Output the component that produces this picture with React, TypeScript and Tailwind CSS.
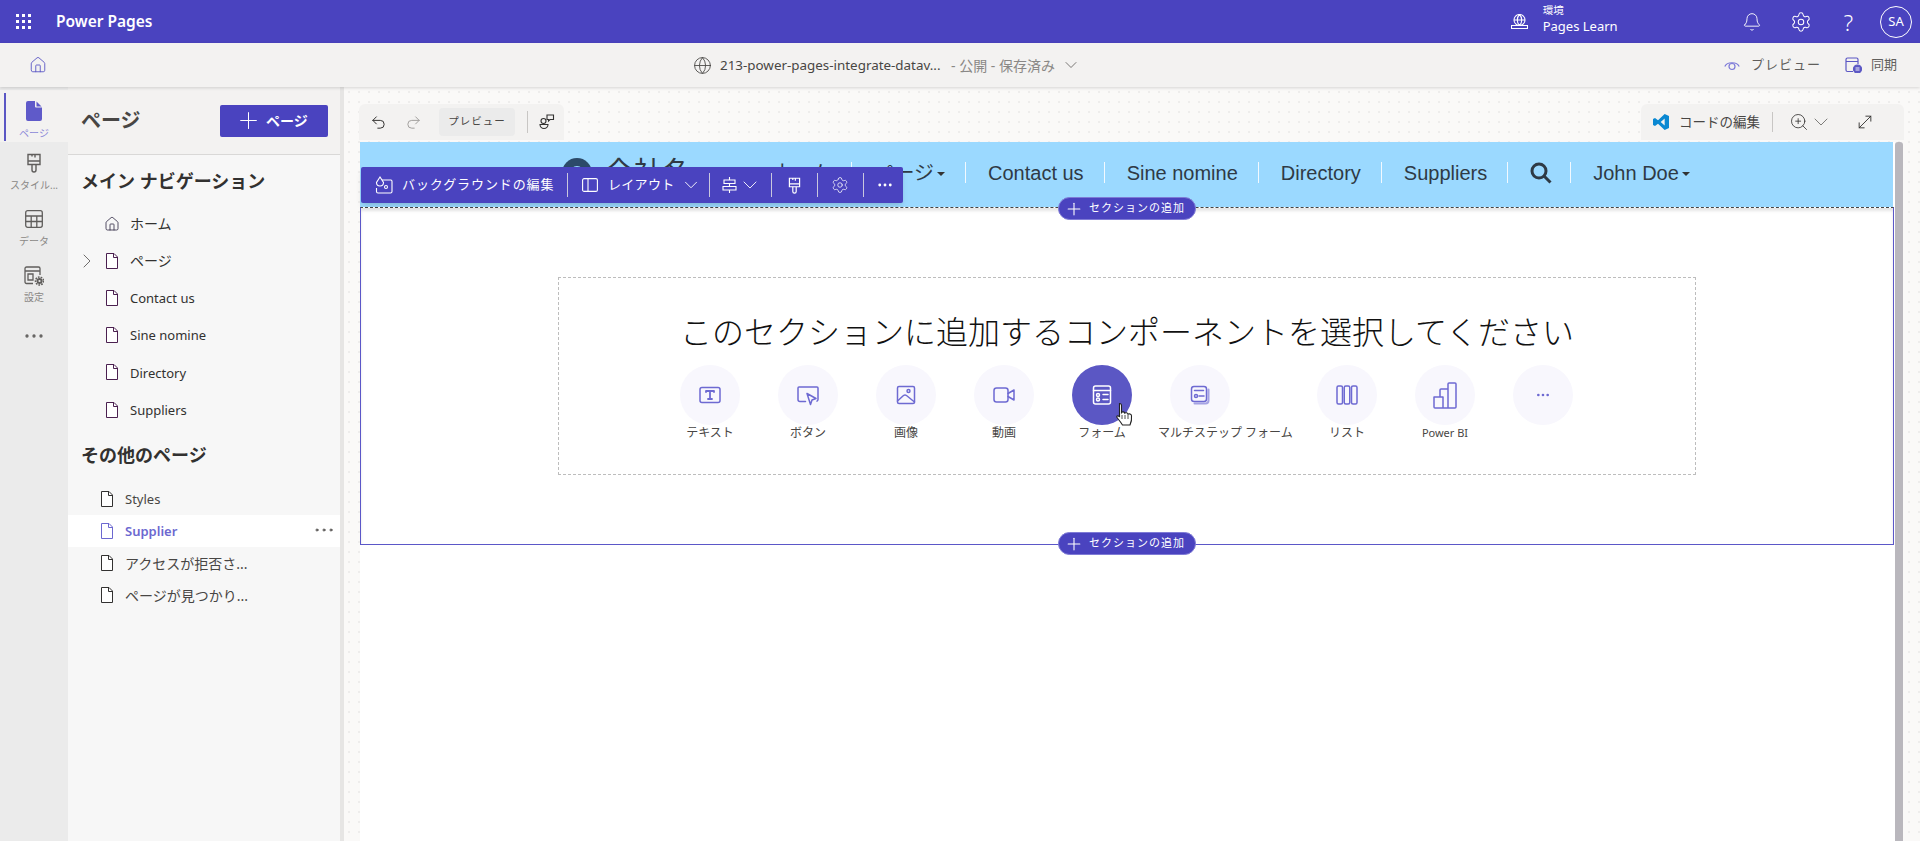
import React from "react";
import { ChevronDown, ChevronRight, Plus, Bell, Settings, Undo2, Redo2, Globe, ZoomIn, MoveDiagonal, Home, Ellipsis } from "lucide-react";

const Doc = ({ c = "#4b2050" }: { c?: string }) => (
  <svg width="14" height="16" viewBox="0 0 14 16" fill="none" stroke={c} strokeWidth="1" className="shrink-0">
    <path d="M1.500.5h7.500l3.500 3.500v11.500h-11z" fill="#fff" />
    <path d="M8.500.5v4h4" />
  </svg>
);

const Brush = ({ c = "#605e5c", s = 20 }: { c?: string; s?: number }) => (
  <svg width={s} height={s} viewBox="0 0 20 20" fill="none" stroke={c} strokeWidth="1.400">
    <path d="M4 1.500h12v10H4zM4 8h12M11 1.500v3M8 1.500v2" />
    <path d="M8 11.500v5.500a2 2 0 0 0 4 0v-5.500" />
  </svg>
);

const I = "#6e6ad2";

const Row = ({ label, chev, home, latin }: { label: string; chev?: boolean; home?: boolean; latin?: boolean }) => (
  <div className={`relative flex h-[37.2px] items-center gap-[11px] pl-[37px] text-[#323130] ${latin ? "text-[13px]" : "text-[14px]"}`}>
    {chev && <ChevronRight size={24} strokeWidth={0.9} className="absolute left-[7px] text-[#605e5c]" />}
    {home ? <Home size={16} strokeWidth={1.200} className="-mx-px text-[#2b2440]" /> : <Doc />}
    <span className={latin ? "pt-[2px]" : ""}>{label}</span>
  </div>
);

const Row2 = ({ label, active, latin }: { label: string; active?: boolean; latin?: boolean }) => (
  <div className={`relative flex h-[32px] items-center gap-[11px] pl-[32px] ${latin ? "text-[13px]" : "text-[14px]"} ${active ? "bg-white font-semibold text-[#6c68d0]" : "text-[#484644]"}`}>
    <Doc c={active ? "#6c68d0" : "#323130"} />
    <span className={latin ? "pt-[2px]" : ""}>{label}</span>
    {active && <Ellipsis size={24} strokeWidth={1} className="absolute right-[4px] top-[3px] text-[#484644]" />}
  </div>
);

const RailItem = ({ icon, label, active, h }: { icon: React.ReactNode; label: string; active?: boolean; h: number }) => (
  <div style={{ height: h }} className={`relative flex flex-col items-center pt-[10px] ${active ? "bg-[#f3f2f1]" : ""}`}>
    {active && <div className="absolute left-[4px] top-[3px] h-[48px] w-[2px] bg-[#5b57c4]" />}
    <div className="flex h-[22px] items-center">{icon}</div>
    <span className={`mt-[4px] whitespace-nowrap text-[10px] leading-[14px] ${active ? "text-[#8b88d8]" : "text-[#8a8886]"}`}>{label}</span>
  </div>
);

const Sep = () => <div className="h-[24px] w-px bg-[#c9c7de]" />;

const Comp = ({ icon, label, active, wide }: { icon: React.ReactNode; label: string; active?: boolean; wide?: boolean }) => (
  <div className={`mr-[38px] flex shrink-0 flex-col ${wide ? "w-[109px] items-start" : "w-[60px] items-center"}`}>
    <div className={`relative flex h-[60px] w-[60px] items-center justify-center rounded-full ${active ? "bg-[#5b57c4]" : "bg-[#f8f7fd]"}`}>
      {icon}
      {active && (
        <svg width="20" height="25" viewBox="0 0 20 25" className="absolute left-[43px] top-[37px]">
          <path d="M4.500 1.500c1.300 0 2 .8 2 2v7c.6-1 3-.8 3.300.7.800-.8 3-.5 3.200 1 1-.6 3.300-.2 3.500 1.500.4 3.500 0 6-1.500 9.300H7.500c-1.500-2.500-3.500-5-5.500-7.500-.8-1 .3-2.500 2.500-1z" fill="#fff" stroke="#222" strokeWidth="1.100" />
          <path d="M7 13v4M10 13v4M13 13v4" stroke="#222" strokeWidth=".8" />
        </svg>
      )}
    </div>
    <span className={`h-[16px] whitespace-nowrap leading-[16px] text-[#484644] ${label === "Power BI" ? "text-[11px]" : "text-[12px]"} ${wide ? "-ml-[12px]" : ""}`}>{label}</span>
  </div>
);

const ico = (children: React.ReactNode, c = I, w = 24) => (
  <svg width={w} height={w} viewBox="0 0 24 24" fill="none" stroke={c} strokeWidth="1.500" strokeLinejoin="round" strokeLinecap="round">
    {children}
  </svg>
);

const AddPill = ({ top }: { top: number }) => (
  <div style={{ top }} className="absolute left-[698px] flex h-[23px] w-[138px] items-center gap-[5px] rounded-full border border-[#7f7bd6] bg-[#4a43bf] pl-[5px] text-[11px] tracking-[1px] text-white">
    <Plus size={20} strokeWidth={1.300} className="shrink-0" />
    <span className="whitespace-nowrap">セクションの追加</span>
  </div>
);

const NavLink = ({ children, sep = true, caret, tight }: { children: React.ReactNode; sep?: boolean; caret?: boolean; tight?: boolean }) => (
  <div className="flex items-center">
    <span className={`flex items-center pl-[22px] ${tight ? "pr-[18px]" : "pr-[20px]"}`}>
      {children}
      {caret && <span className="ml-[3px] mt-[2px] h-0 w-0 border-x-[4px] border-t-[4px] border-x-transparent border-t-[#333]" />}
    </span>
    {sep && <span className="h-[21px] w-px bg-[#f2f9ff]" />}
  </div>
);

export default function App() {
  return (
    <div className="flex h-[841px] w-[1920px] flex-col overflow-hidden bg-white font-['Noto_Sans','Noto_Sans_CJK_JP',sans-serif]">
      {/* top bar */}
      <header className="flex h-[43px] shrink-0 items-center bg-[#4a43bf] text-white">
        <svg width="16" height="16" viewBox="0 0 16 16" fill="#fff" className="ml-[16px]">
          {[0, 6, 12].flatMap((y) => [0, 6, 12].map((x) => <rect key={`${x}-${y}`} x={x} y={y} width="3" height="3" />))}
        </svg>
        <span className="ml-[24px] text-[15.500px] font-semibold">Power Pages</span>
        <div className="ml-auto flex items-center">
          <svg width="17" height="15" viewBox="0 0 17 15" fill="none" stroke="#fff" strokeWidth="1.100">
            <circle cx="8.500" cy="6" r="5.500" />
            <path d="M3 6h11M8.500.5c-3 3-3 8 0 11M8.500.5c3 3 3 8 0 11M.5 11.500h16v3H.5z" />
          </svg>
          <div className="-mt-[5px] ml-[15px] flex w-[74px] flex-col">
            <span className="text-[10.500px] leading-[14px]">環境</span>
            <span className="whitespace-nowrap text-[13px] leading-[18px]">Pages Learn</span>
          </div>
          <Bell size={20} strokeWidth={1.100} className="ml-[125px]" />
          <Settings size={22} strokeWidth={1.100} className="ml-[28px]" />
          <span className="ml-[32px] text-[22px] font-light leading-none">?</span>
          <div className="ml-[27px] mr-[8px] flex h-[32px] w-[32px] items-center justify-center rounded-full border border-white text-[13px]">SA</div>
        </div>
      </header>

      {/* sub bar */}
      <div className="relative z-10 flex h-[44px] shrink-0 items-center bg-[#f3f2f1] shadow-[0_1px_3px_rgba(0,0,0,0.15)]">
        <Home size={18} strokeWidth={1.200} className="ml-[29px] text-[#5b57c4]" />
        <div className="ml-[646px] flex items-center text-[14px] text-[#484644]">
          <Globe size={19} strokeWidth={1.100} className="text-[#484644]" />
          <span className="ml-[8px] w-[221px] whitespace-nowrap text-[13.400px]">213-power-pages-integrate-datav...</span>
          <span className="ml-[10px] whitespace-nowrap text-[#8a8886]">- 公開 - 保存済み</span>
          <ChevronDown size={20} strokeWidth={1} className="ml-[6px] text-[#605e5c]" />
        </div>
        <div className="ml-auto mr-[23px] flex items-center text-[13px] text-[#605e5c]">
          <svg width="16" height="12" viewBox="0 0 16 12" fill="none" stroke="#7d7ad8" strokeWidth="1.200">
            <path d="M.8 7.500C3 2.500 13 2.500 15.200 7.500" />
            <circle cx="8" cy="7.500" r="3" />
          </svg>
          <span className="ml-[11px] whitespace-nowrap tracking-[1px]">プレビュー</span>
          <svg width="17" height="16" viewBox="0 0 17 16" fill="none" stroke="#5b57c4" strokeWidth="1.200" className="ml-[24px]">
            <path d="M8 14.500H2.500a1.500 1.500 0 0 1-1.500-1.500V2.500A1.500 1.500 0 0 1 2.500 1h9A1.500 1.500 0 0 1 13 2.500V7M1 4.500h12" />
            <circle cx="12.500" cy="12" r="4" fill="#5b57c4" />
            <path d="M10.500 11h4M10.500 13h4" stroke="#fff" strokeWidth=".9" />
          </svg>
          <span className="ml-[9px] whitespace-nowrap">同期</span>
        </div>
      </div>

      {/* body */}
      <div className="flex min-h-0 flex-1">
        {/* rail */}
        <aside className="w-[68px] shrink-0 bg-[#ebebeb] pt-[3px]">
          <RailItem
            active
            h={52}
            label="ページ"
            icon={
              <svg width="16" height="20" viewBox="0 0 16 20">
                <path d="M2 0h7v5.500a1 1 0 0 0 1 1h6V18a2 2 0 0 1-2 2H2a2 2 0 0 1-2-2V2a2 2 0 0 1 2-2z" fill="#5f5ac9" />
                <path d="M10.500 .5l5 5h-5z" fill="#5f5ac9" />
              </svg>
            }
          />
          <RailItem h={56} label="スタイル..." icon={<Brush s={20} />} />
          <RailItem
            h={58}
            label="データ"
            icon={
              <svg width="18" height="18" viewBox="0 0 18 18" fill="none" stroke="#605e5c" strokeWidth="1.300">
                <rect x=".7" y=".7" width="16.600" height="16.600" rx="2" />
                <path d="M.7 6h16.600M.7 11.500h16.600M6.200 6v11.300M11.800 6v11.300" />
              </svg>
            }
          />
          <RailItem
            h={41}
            label="設定"
            icon={
              <svg width="20" height="20" viewBox="0 0 20 20" fill="none" stroke="#605e5c" strokeWidth="1.300">
                <path d="M9 17.500H2.500a1.500 1.500 0 0 1-1.500-1.500V2.500A1.500 1.500 0 0 1 2.500 1h12A1.500 1.500 0 0 1 16 2.500V9M1 5h15M4 8h5v6H4z" />
                <circle cx="15.500" cy="15" r="3.600" fill="#605e5c" stroke="#ebebeb" strokeWidth="1" />
                <circle cx="15.500" cy="15" r="4" stroke="#605e5c" strokeWidth="1.600" strokeDasharray="1.600 1.200" />
                <circle cx="15.500" cy="15" r="1.100" fill="#ebebeb" stroke="none" />
              </svg>
            }
          />
          <div className="mt-[27px] flex justify-center">
            <Ellipsis size={24} strokeWidth={1.300} className="text-[#605e5c]" />
          </div>
        </aside>

        {/* pages panel */}
        <aside className="flex w-[276px] shrink-0 flex-col border-r-[4px] border-[#e6e5e4] bg-[#f7f7f7]">
          <div className="flex h-[68px] shrink-0 items-center justify-between border-b border-[#d9d8d7] bg-[#f3f2f1] pl-[13px] pr-[12px]">
            <span className="text-[20px] font-semibold text-[#484644]">ページ</span>
            <button className="flex h-[32px] w-[108px] items-center gap-[4px] rounded-[2px] bg-[#4a43bf] pl-[15px] text-[14px] font-semibold text-white">
              <Plus size={27} strokeWidth={0.9} />
              ページ
            </button>
          </div>
          <div className="mb-[12px] ml-[13px] mt-[14px] flex h-[24px] items-center whitespace-nowrap text-[18px] font-semibold text-[#323130]">メイン ナビゲーション</div>
          <Row label="ホーム" home />
          <Row label="ページ" chev />
          <Row label="Contact us" latin />
          <Row label="Sine nomine" latin />
          <Row label="Directory" latin />
          <Row label="Suppliers" latin />
          <div className="mb-[16px] ml-[13px] mt-[15px] flex h-[24px] items-center text-[18px] font-semibold text-[#323130]">その他のページ</div>
          <Row2 label="Styles" latin />
          <Row2 label="Supplier" active latin />
          <Row2 label="アクセスが拒否さ..." />
          <Row2 label="ページが見つかり..." />
        </aside>

        {/* canvas */}
        <main className="flex min-w-0 flex-1 flex-col bg-[#faf9f8] bg-[radial-gradient(#eeedec_1px,transparent_1.2px)] bg-[size:10px_10px] pl-[16px] pr-[17px] pt-[17px]">
          <div className="mb-[2px] flex h-[36px] shrink-0 justify-between">
            <div className="-ml-px flex h-[36px] w-[205px] items-center rounded-t-[6px] bg-[#f3f2f1] text-[#323130]">
              <Undo2 size={17} strokeWidth={1.400} className="ml-[11px]" />
              <Redo2 size={17} strokeWidth={1.400} className="ml-[18px] text-[#a19f9d]" />
              <span className="ml-[17px] flex h-[28px] w-[76px] items-center justify-center rounded-[4px] bg-[#ebebeb] text-[10.500px] tracking-[1px] text-[#484644]">プレビュー</span>
              <span className="ml-[12px] h-[22px] w-px bg-[#c8c6c4]" />
              <svg width="16" height="16" viewBox="0 0 16 16" fill="none" stroke="#323130" strokeWidth="1.100" className="ml-[11px]">
                <path d="M1 10.500h8a4 4 0 0 1-8 0z" />
                <circle cx="4.500" cy="7" r="2.500" />
                <path d="M8 1h6.500v4.500H11l-1.500 1.500V5.500H8z" />
              </svg>
            </div>
            <div className="-mr-px flex h-[36px] w-[263px] items-center rounded-t-[6px] bg-[#f3f2f1] text-[#323130]">
              <svg width="16" height="16" viewBox="0 0 24 24" className="ml-[12px]">
                <path d="M17.500 0L24 3v18l-6.500 3-10-9.500-4.500 3.500-3-1.500V7.500L3 6l4.500 3.500zM17.500 6.800L11.500 12l6 5.200z" fill="#0a88d2" />
              </svg>
              <span className="ml-[10px] whitespace-nowrap text-[13.500px] text-[#484644]">コードの編集</span>
              <span className="ml-[12px] h-[20px] w-px bg-[#c8c6c4]" />
              <ZoomIn size={20} strokeWidth={1} className="ml-[16px]" />
              <ChevronDown size={24} strokeWidth={0.8} className="text-[#605e5c]" />
              <MoveDiagonal size={20} strokeWidth={1.100} className="ml-[22px]" />
            </div>
          </div>

          <div className="relative flex min-h-0 flex-1">
            <div className="flex w-[1535px] flex-col bg-white">
              {/* site nav */}
              <div className="flex h-[65px] w-[1533px] shrink-0 items-center bg-[#9bd9ff] pb-[4px] pl-[202px] font-['Liberation_Sans','Noto_Sans_CJK_JP',sans-serif] text-[20px] text-[#2f3a45]">
                <div className="flex h-[30px] w-[30px] items-center justify-center rounded-full bg-[#2c4a69]">
                  <div className="h-[14px] w-[14px] rounded-full border-[2px] border-[#9bd9ff]" />
                </div>
                <span className="ml-[13px] w-[83px] whitespace-nowrap text-[28px] tracking-[1px]">会社名</span>
                <div className="ml-[62px] flex items-center">
                  <NavLink>ホーム</NavLink>
                  <NavLink caret>ページ</NavLink>
                  <NavLink>Contact us</NavLink>
                  <NavLink>Sine nomine</NavLink>
                  <NavLink>Directory</NavLink>
                  <NavLink>Suppliers</NavLink>
                  <NavLink tight>
                    <svg width="22" height="22" viewBox="0 0 22 22" fill="none" stroke="#2f3a45" strokeWidth="3">
                      <circle cx="9" cy="9" r="7" />
                      <path d="M14 14l6.500 6.500" />
                    </svg>
                  </NavLink>
                  <NavLink sep={false} caret>
                    John Doe
                  </NavLink>
                </div>
              </div>

              {/* section */}
              <div className="h-[338px] w-[1534px] shrink-0 border border-x-[#5b57c8] border-b-[#5b57c8] border-t-[#444] pt-[69px] shadow-[inset_0_3px_3px_rgba(0,0,0,0.10)] [border-top-style:dashed]">
                <div className="ml-[197px] flex h-[198px] w-[1138px] flex-col items-center border border-dashed border-[#bdbdbd]">
                  <h2 className="mt-[32px] h-[44px] whitespace-nowrap text-[32px] font-light leading-[44px] text-[#111]">このセクションに追加するコンポーネントを選択してください</h2>
                  <div className="mt-[11px] flex w-full pl-[121px]">
                    <Comp label="テキスト" icon={ico(<><rect x="2" y="4.500" width="20" height="15" rx="2" /><path d="M8 9V8h8v1M12 8v8M10 16h4" strokeWidth="1.800" /></>)} />
                    <Comp label="ボタン" icon={ico(<><path d="M9.500 18.500H4a2 2 0 0 1-2-2V5a1 1 0 0 1 1-1h18a1 1 0 0 1 1 1v11.500a2 2 0 0 1-1 1.700" /><path d="M11 10.500l9 5-4 1.500-1.500 4.500z" /></>)} />
                    <Comp label="画像" icon={ico(<><rect x="3.500" y="3.500" width="17" height="17" rx="1.500" /><circle cx="14.500" cy="8" r="1.500" /><path d="M3.500 18l6-5.500c1-.8 2-.8 3 0l8 6.500" /></>)} />
                    <Comp label="動画" icon={ico(<><rect x="2" y="5" width="14" height="14" rx="2.500" /><path d="M16 10.500l6-3.500v10l-6-3.500" /></>)} />
                    <Comp active label="フォーム" icon={ico(<><rect x="3.500" y="3" width="17" height="18" rx="2" /><path d="M3.500 7.500h17M13 11.500h5M13 16.500h5" /><circle cx="8" cy="12" r="1.500" /><circle cx="8" cy="16.500" r="1.500" /></>, "#fff")} />
                    <Comp wide label="マルチステップ フォーム" icon={ico(<><rect x="3.500" y="3.500" width="15" height="15" rx="2.500" /><path d="M20.500 6.500v11a3 3 0 0 1-3 3h-11" strokeWidth="2" opacity=".6" /><path d="M6.500 7.500h9M11 13h5" /><circle cx="8" cy="13" r="1.500" /></>)} />
                    <Comp label="リスト" icon={ico(<><rect x="2" y="3" width="5.500" height="18" rx="1.500" /><rect x="9.250" y="3" width="5.500" height="18" rx="1.500" /><rect x="16.500" y="3" width="5.500" height="18" rx="1.500" /></>)} />
                    <Comp
                      label="Power BI"
                      icon={
                        <svg width="24" height="27" viewBox="0 0 24 27" fill="none" stroke={I} strokeWidth="1.500" strokeLinejoin="round">
                          <path d="M1 15h9v11H2a1 1 0 0 1-1-1zM7 15V8a1 1 0 0 1 1-1h7M10 26h12a1 1 0 0 0 1-1V2a1 1 0 0 0-1-1h-6a1 1 0 0 0-1 1v24" />
                        </svg>
                      }
                    />
                    <Comp label="" icon={<Ellipsis size={16} strokeWidth={2} className="text-[#6e6ad2]" />} />
                  </div>
                </div>
              </div>
            </div>
            <div className="w-[8px] shrink-0 rounded-t-[3px] bg-[#b9b7bd]" />

            {/* floating section toolbar */}
            <div className="absolute left-px top-[25px] flex h-[36px] w-[542px] items-center rounded-[2px] bg-[#4a43bf] text-[13px] text-white shadow-md">
              <svg width="18" height="18" viewBox="0 0 18 18" fill="none" stroke="#fff" strokeWidth="1.100" className="ml-[14px]">
                <path d="M7 4h9a1.500 1.500 0 0 1 1 1.500v10a1.500 1.500 0 0 1-1.500 1.500H3a1.500 1.500 0 0 1-1.500-1.500V12" />
                <path d="M5 1L1.500 6.500a3 3 0 0 0 7 0z" />
                <circle cx="11" cy="11" r="1.500" />
              </svg>
              <span className="ml-[9px] w-[153px] whitespace-nowrap tracking-[0.9px]">バックグラウンドの編集</span>
              <span className="ml-[12px]"><Sep /></span>
              <svg width="16" height="14" viewBox="0 0 16 14" fill="none" stroke="#fff" strokeWidth="1.100" className="ml-[14px]">
                <rect x=".6" y=".6" width="14.800" height="12.800" rx="1.500" />
                <path d="M6 .6v12.800" />
              </svg>
              <span className="ml-[10px] w-[67px] whitespace-nowrap tracking-[0.3px]">レイアウト</span>
              <ChevronDown size={22} strokeWidth={1} className="ml-[5px]" />
              <span className="ml-[7px]"><Sep /></span>
              <svg width="15" height="16" viewBox="0 0 15 16" fill="none" stroke="#fff" strokeWidth="1.100" className="ml-[12px]">
                <path d="M7.500 0v3M7.500 6.500v3M7.500 13v3M2 3h11v3.500H2zM1 9.500h13V13H1z" />
              </svg>
              <ChevronDown size={24} strokeWidth={0.9} className="ml-px" />
              <span className="ml-[9px]"><Sep /></span>
              <span className="ml-[14px]"><Brush c="#fff" s={17} /></span>
              <span className="ml-[14px]"><Sep /></span>
              <Settings size={18} strokeWidth={1} className="ml-[13px]" />
              <span className="ml-[14px]"><Sep /></span>
              <Ellipsis size={18} strokeWidth={1.800} className="ml-[12px]" />
            </div>

            <AddPill top={55} />
            <AddPill top={390} />
          </div>
        </main>
      </div>
    </div>
  );
}
